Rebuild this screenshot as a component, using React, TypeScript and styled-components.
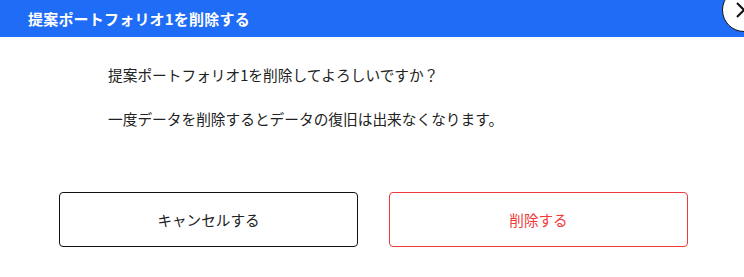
import { createGlobalStyle, styled } from "styled-components";

const GlobalStyle = createGlobalStyle`
  html, body {
    margin: 0;
    padding: 0;
    background: #ffffff;
    font-family: "Noto Sans CJK JP", "Noto Sans", sans-serif;
    overflow: hidden;
  }
`;

const Dialog = styled.div`
  position: relative;
  width: 744px;
  height: 277px;
  background: #fff;
`;

const Header = styled.header`
  height: 37px;
  background: #1f6cf6;
  display: flex;
  align-items: center;
  padding-left: 28px;
  color: #fff;
  font-size: 15px;
  font-weight: 700;
  letter-spacing: 0.2px;
`;

const CloseButton = styled.button`
  position: absolute;
  top: -12px;
  right: -22px;
  width: 44px;
  height: 44px;
  border-radius: 50%;
  border: 1.5px solid #111;
  background: #fff;
  padding: 0;
  display: flex;
  align-items: center;
  justify-content: center;
  cursor: pointer;
`;

const Body = styled.div`
  padding: 27px 0 0 108px;
  font-size: 14.7px;
  color: #222;
`;

const Message = styled.p`
  margin: 0 0 23px;
  line-height: 21px;
`;

const Actions = styled.div`
  display: flex;
  gap: 31px;
  padding: 40px 0 0 59px;
`;

const ActionButton = styled.button<{ $danger?: boolean }>`
  width: 299px;
  height: 55px;
  box-sizing: border-box;
  border-radius: 4px;
  background: #fff;
  border: 1px solid ${(p) => (p.$danger ? "#f03a3a" : "#111")};
  color: ${(p) => (p.$danger ? "#f03a3a" : "#222")};
  font-family: inherit;
  font-size: 14.6px;
  cursor: pointer;
`;

function App() {
  return (
    <>
      <GlobalStyle />
      <Dialog>
        <Header>提案ポートフォリオ1を削除する</Header>
        <CloseButton aria-label="閉じる">
          <svg width="18" height="18" viewBox="0 0 18 18">
            <path d="M2 2L16 16M16 2L2 16" stroke="#111" strokeWidth="2" fill="none" />
          </svg>
        </CloseButton>
        <Body>
          <Message>提案ポートフォリオ1を削除してよろしいですか？</Message>
          <Message>一度データを削除するとデータの復旧は出来なくなります。</Message>
        </Body>
        <Actions>
          <ActionButton>キャンセルする</ActionButton>
          <ActionButton $danger>削除する</ActionButton>
        </Actions>
      </Dialog>
    </>
  );
}

export default App;
